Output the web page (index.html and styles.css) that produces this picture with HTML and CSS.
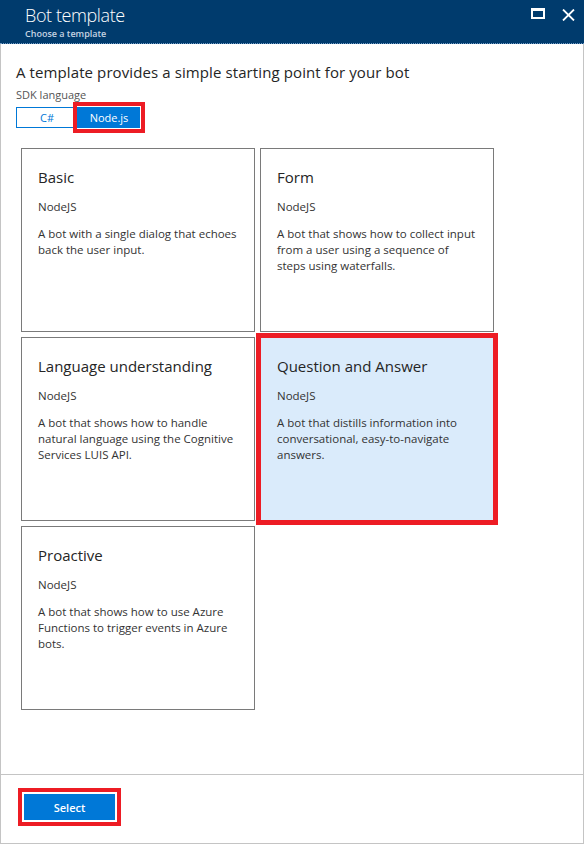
FILE: index.html
```html
<!DOCTYPE html>
<html lang="en">
<head>
<meta charset="utf-8">
<title>Bot template</title>
<link rel="stylesheet" href="styles.css">
</head>
<body>
<div class="blade">
  <header class="blade-header">
    <div class="titles">
      <div class="title">Bot template</div>
      <div class="subtitle">Choose a template</div>
    </div>
    <div class="controls">
      <svg class="icon" width="14" height="11" viewBox="0 0 14 11"><rect x="1" y="1.5" width="12" height="8.5" fill="none" stroke="#fff" stroke-width="2"/><rect x="0" y="0" width="14" height="3" fill="#fff"/></svg>
      <svg class="icon close" width="13" height="12" viewBox="0 0 13 12"><path d="M1 0.5 L12 11.5 M12 0.5 L1 11.5" stroke="#fff" stroke-width="1.8" fill="none"/></svg>
    </div>
  </header>
  <main class="blade-content">
    <h1 class="lead">A template provides a simple starting point for your bot</h1>
    <div class="label">SDK language</div>
    <div class="toggle">
      <button class="tog">C#</button>
      <button class="tog active">Node.js</button>
    </div>
    <div class="grid">
      <div class="card">
        <div class="card-title">Basic</div>
        <div class="card-lang">NodeJS</div>
        <div class="card-desc">A bot with a single dialog that echoes back the user input.</div>
      </div>
      <div class="card">
        <div class="card-title">Form</div>
        <div class="card-lang">NodeJS</div>
        <div class="card-desc">A bot that shows how to collect input from a user using a sequence of steps using waterfalls.</div>
      </div>
      <div class="card">
        <div class="card-title">Language understanding</div>
        <div class="card-lang">NodeJS</div>
        <div class="card-desc">A bot that shows how to handle natural language using the Cognitive Services LUIS API.</div>
      </div>
      <div class="card selected">
        <div class="card-title">Question and Answer</div>
        <div class="card-lang">NodeJS</div>
        <div class="card-desc">A bot that distills information into conversational, easy-to-navigate answers.</div>
      </div>
      <div class="card">
        <div class="card-title">Proactive</div>
        <div class="card-lang">NodeJS</div>
        <div class="card-desc">A bot that shows how to use Azure Functions to trigger events in Azure bots.</div>
      </div>
    </div>
  </main>
  <footer class="blade-footer">
    <div class="select-wrap"><button class="select-btn">Select</button></div>
  </footer>
</div>
</body>
</html>
```
FILE: styles.css
```css
* { box-sizing: border-box; }
html, body { margin: 0; padding: 0; }
body {
  font-family: "Segoe UI", "Open Sans", "Noto Sans", sans-serif;
  color: #252525;
  background: #fff;
}
.blade {
  width: 584px;
  height: 844px;
  display: flex;
  flex-direction: column;
  border-left: 1px solid #c4c4c4;
  border-right: 1px solid #c4c4c4;
  border-bottom: 1px solid #c4c4c4;
}
.blade-header {
  height: 44px;
  margin: 0 -1px;
  background: #003b6d;
  border-bottom: 1px dotted #6f9ac4;
  display: flex;
  justify-content: space-between;
  padding: 0 9px 0 25px;
  color: #fff;
}
.title {
  font-size: 18px;
  font-weight: 300;
  line-height: 20px;
  margin-top: 5px;
  letter-spacing: -0.4px;
}
.subtitle {
  font-size: 9px;
  font-weight: 600;
  color: #c5d3e2;
  margin-top: 3px;
  line-height: 12px;
}
.controls {
  display: flex;
  gap: 17px;
  padding-top: 8px;
}
.icon { display: block; }
.close { margin-top: 1px; }
.blade-content {
  flex: 1;
  padding: 0 15px;
}
.lead {
  font-size: 15px;
  font-weight: 400;
  margin: 18px 0 0;
  line-height: 20px;
  color: #252525;
  letter-spacing: 0.1px;
}
.label {
  font-size: 11px;
  color: #555;
  margin-top: 5px;
  line-height: 15px;
}
.toggle {
  display: flex;
  margin-top: 5px;
}
.tog {
  font-family: inherit;
  font-size: 11px;
  height: 21px;
  width: 62px;
  border: 1px solid #0078d7;
  background: #fff;
  color: #0078d7;
  padding: 0;
}
.tog.active {
  background: #0078d7;
  color: #fff;
  outline: 4px solid #ed1c24;
  outline-offset: 1px;
  position: relative;
}
.grid {
  display: grid;
  grid-template-columns: 234px 234px;
  grid-auto-rows: 184px;
  gap: 5px;
  margin: 20px 0 0 5px;
}
.card {
  border: 1px solid #7a7a7a;
  padding: 18px 16px;
  background: #fff;
}
.card.selected {
  background: #daebfb;
  outline: 5px solid #ed1c24;
  outline-offset: -1px;
  border-color: #ed1c24;
}
.card-title {
  font-size: 15px;
  line-height: 20px;
  color: #252525;
}
.card-lang {
  font-size: 11.5px;
  line-height: 15px;
  margin-top: 12px;
  color: #333;
}
.card-desc {
  font-size: 11.5px;
  line-height: 16px;
  margin-top: 12px;
  color: #333;
}
.blade-footer {
  height: 69px;
  border-top: 1px solid #c4c4c4;
  padding: 13px 0 0 17px;
}
.select-wrap {
  display: inline-block;
  border: 4px solid #ed1c24;
  padding: 2px;
}
.select-btn {
  display: block;
  width: 91px;
  height: 26px;
  border: none;
  background: #0078d7;
  color: #fff;
  font-family: inherit;
  font-size: 11px;
  font-weight: 600;
  padding: 0;
}
```
